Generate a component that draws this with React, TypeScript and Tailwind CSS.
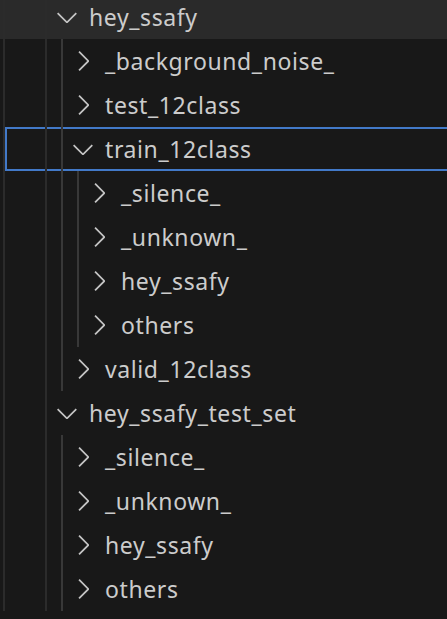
type Node = { label: string; depth: number; open?: boolean; focused?: boolean; sticky?: boolean };

const ROWS: Node[] = [
  { label: "hey_ssafy", depth: 1, open: true, sticky: true },
  { label: "_background_noise_", depth: 2 },
  { label: "test_12class", depth: 2 },
  { label: "train_12class", depth: 2, open: true, focused: true },
  { label: "_silence_", depth: 3 },
  { label: "_unknown_", depth: 3 },
  { label: "hey_ssafy", depth: 3 },
  { label: "others", depth: 3 },
  { label: "valid_12class", depth: 2 },
  { label: "hey_ssafy_test_set", depth: 1, open: true },
  { label: "_silence_", depth: 2 },
  { label: "_unknown_", depth: 2 },
  { label: "hey_ssafy", depth: 2 },
  { label: "others", depth: 2 },
];

const INDENT = ["", "pl-[51px]", "pl-[67px]", "pl-[83px]"];

function Chevron({ open }: { open?: boolean }) {
  return (
    <svg width="32" height="32" viewBox="0 0 16 16" fill="#c5c5c5" className="shrink-0">
      {open ? (
        <path d="M7.976 10.072l4.357-4.357.62.618L8.284 11h-.618L3 6.333l.619-.618 4.357 4.357z" />
      ) : (
        <path d="M10.072 8.024L5.715 3.667l.618-.62L11 7.716v.618L6.333 13l-.618-.619 4.357-4.357z" />
      )}
    </svg>
  );
}

// indent guides sit over the row, like the tree's own guide layer
function Guides({ depth }: { depth: number }) {
  return (
    <>
      <span className="absolute left-[3px] top-0 h-full w-[2px] bg-[#2b2b2b]" />
      <span className="absolute left-[45px] top-0 h-full w-[2px] bg-[#2b2b2b]" />
      {depth >= 2 && <span className="absolute left-[61px] top-0 h-full w-[2px] bg-[#383838]" />}
      {depth >= 3 && <span className="absolute left-[77px] top-0 h-full w-[2px] bg-[#383838]" />}
    </>
  );
}

function Row({ node }: { node: Node }) {
  return (
    <div className={"relative h-[44px] shrink-0" + (node.sticky ? " bg-[#2a2a2a]" : "")}>
      <Guides depth={node.depth} />
      <div
        className={
          "flex h-full items-center " +
          (node.focused
            ? "-mr-[20px] ml-[5px] border-2 border-[#4279c8] pl-[60px]"
            : INDENT[node.depth])
        }
      >
        <Chevron open={node.open} />
        <span className="ml-[6px] whitespace-nowrap text-[23px] tracking-[0.6px] text-[#cccccc]">
          {node.label}
        </span>
      </div>
    </div>
  );
}

export default function App() {
  return (
    <div
      className="h-[619px] w-[447px] overflow-hidden bg-[#181818]"
      style={{ fontFamily: '"Noto Sans", "Open Sans", sans-serif' }}
    >
      <div className="-mt-[5px] flex flex-col">
        {ROWS.map((n, i) => (
          <Row key={i} node={n} />
        ))}
      </div>
    </div>
  );
}
